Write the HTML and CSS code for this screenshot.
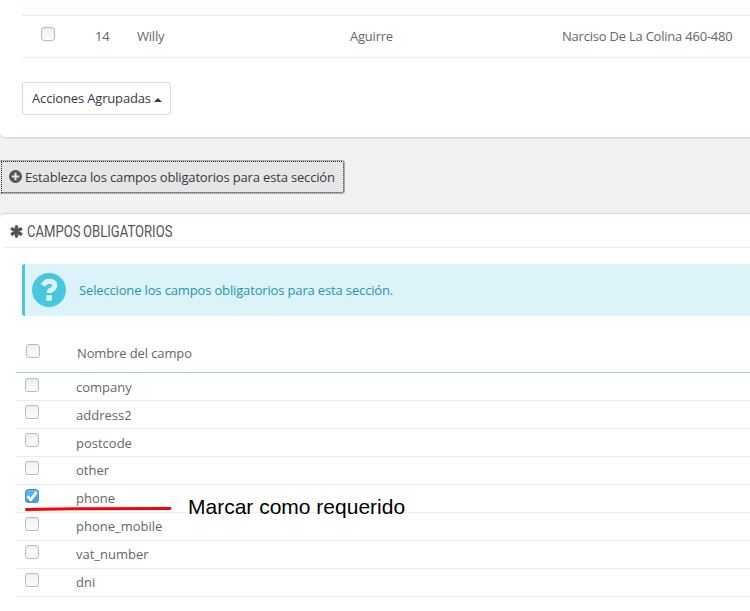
FILE: index.html
```html
<!DOCTYPE html>
<html lang="es">
<head>
<meta charset="utf-8">
<title>Campos obligatorios</title>
<link rel="stylesheet" href="styles.css">
</head>
<body>
<section class="panel customers">
  <div class="customer-prev"></div>
  <div class="customer-row">
    <span class="cell-check"><i class="check"></i></span>
    <span>14</span><span>Willy</span><span>Aguirre</span><span>Narciso De La Colina 460-480</span>
  </div>
  <button class="btn bulk" type="button"><span>Acciones Agrupadas</span><i class="caret"></i></button>
</section>

<button class="btn toggle" type="button">
  <svg class="plus" viewBox="0 0 13 13"><circle cx="6.5" cy="6.5" r="6.5" fill="#555"/><path d="M6.5 2.8v7.4M2.8 6.5h7.4" stroke="#e6e6e6" stroke-width="2"/></svg>
  <span>Establezca los campos obligatorios para esta sección</span>
</button>

<section class="panel fields">
  <h3 class="heading">
    <svg class="star" viewBox="0 0 13 13"><path d="M6.5 1.7v9.6M2.3 4.1l8.4 4.8M10.7 4.1L2.3 8.9" stroke="#555" stroke-width="3.4" stroke-linecap="round"/></svg>
    <span class="title">CAMPOS OBLIGATORIOS</span>
  </h3>
  <div class="alert">
    <svg class="help" viewBox="0 0 34 34"><circle cx="17" cy="17" r="17" fill="#4ac7e0"/><path d="M11 12.5Q13.2 8.2 17.2 8.2Q22.7 8.2 22.7 12.7Q22.7 15 19.6 16.8Q17.2 18 17.2 20" fill="none" stroke="#dcf4f9" stroke-width="5"/><path d="M14.3 22.2h5.5v5.6h-5.5z" fill="#dcf4f9"/></svg>
    <span>Seleccione los campos obligatorios para esta sección.</span>
  </div>
  <div class="table">
    <div class="thead"><i class="check"></i><span>Nombre del campo</span></div>
    <div class="row first"><i class="check"></i><span>company</span></div>
    <div class="row"><i class="check"></i><span>address2</span></div>
    <div class="row"><i class="check"></i><span>postcode</span></div>
    <div class="row raised"><i class="check"></i><span>other</span></div>
    <div class="row raised marked">
      <i class="check checked"><svg viewBox="0 0 14 14"><path d="M2.4 7.2l3.4 3.4L11.6 3.2" fill="none" stroke="#fff" stroke-width="2.7"/></svg></i><span>phone</span>
      <svg class="underline" viewBox="0 0 150 6"><path d="M2.5 3.6L50 2.8L146 2.500" fill="none" stroke="#f00" stroke-width="3" stroke-linecap="round"/></svg>
      <b class="note">Marcar como requerido</b>
    </div>
    <div class="row raised"><i class="check"></i><span>phone_mobile</span></div>
    <div class="row raised"><i class="check"></i><span>vat_number</span></div>
    <div class="row raised"><i class="check"></i><span>dni</span></div>
  </div>
</section>
</body>
</html>
```
FILE: styles.css
```css
* { box-sizing: border-box; }
body {
  margin: 0;
  height: 611px;
  overflow: hidden;
  background: #eff1f3;
  color: #666;
  font: 13px/18px "Open Sans", sans-serif;
}
svg { display: block; flex: none; }
.panel { background: #fff; width: 760px; }
.customers {
  height: 138px;
  padding-left: 22px;
  border-bottom: 1px solid #d3d8db;
  border-bottom-left-radius: 5px;
  box-shadow: 0 1px 1px #e6e9eb;
}
.customer-prev { height: 16px; background: #fcfdfe; border-bottom: 1px solid #eaedef; }
.customer-row {
  display: grid;
  grid-template-columns: 73px 42px 213px 212px 1fr;
  height: 42px;
  padding-top: 11px;
  border-bottom: 1px solid #eaedef;
  letter-spacing: -.22px;
}
.cell-check { padding-left: 19px; }
.check {
  display: block;
  flex: none;
  width: 14px;
  height: 14px;
  border: 1px solid #bbb;
  border-radius: 3px;
  background: linear-gradient(#eee, #fcfcfc);
}
.checked { border-color: #4c91bd; background: linear-gradient(#60bce9, #3f9fe0); }
.checked svg { width: 14px; height: 14px; margin: -1px; }
.btn {
  display: flex;
  align-items: center;
  font: inherit;
  letter-spacing: -.16px;
  white-space: nowrap;
  color: #363a41;
  border-radius: 3px;
}
.bulk {
  width: 149px;
  height: 33px;
  margin-top: 24px;
  padding: 0 0 1px 9px;
  background: #fff;
  border: 1px solid #d9dbde;
}
.caret {
  margin: 4px 0 0 3px;
  border: 4px solid transparent;
  border-top: 0;
  border-bottom-color: #363a41;
}
.toggle {
  width: 345px;
  height: 34px;
  margin: 22px 0 19px;
  padding: 0 0 0 9px;
  background: #e6e6e6;
  border: 1px solid #adadad;
  border-left: 0;
  border-radius: 0 3px 3px 0;
  outline: 1px dotted #222;
  outline-offset: -2px;
}
.plus { width: 13px; height: 13px; margin: -1px 3px 0 0; }
.fields {
  height: 410px;
  border-top: 1px solid #d3d8db;
  border-top-left-radius: 5px;
}
.heading {
  display: flex;
  align-items: center;
  height: 34px;
  margin: 0 0 0 4px;
  padding-left: 6px;
  border-bottom: 1px solid #eaedef;
}
.star { width: 13px; height: 13px; margin: 2px 4px 0 0; }
.title {
  margin-top: 1px;
  font: 400 17px/20px Roboto, sans-serif;
  word-spacing: -1px;
  color: #555;
  white-space: nowrap;
  transform: scaleX(.77);
  transform-origin: left;
}
.alert {
  display: flex;
  align-items: center;
  height: 52px;
  margin: 16px 0 0 22px;
  padding-left: 7px;
  border-left: 3px solid #4ac7e0;
  border-radius: 3px;
  background: #dcf4f9;
  color: #1e94ab;
  letter-spacing: -.15px;
}
.help { width: 34px; height: 34px; margin-right: 13px; }
.table { margin-left: 16px; }
.thead {
  display: flex;
  gap: 37px;
  height: 57px;
  padding: 28px 0 0 10px;
  border-bottom: 1px solid #a0d0eb;
  letter-spacing: -.12px;
}
.row {
  position: relative;
  display: flex;
  gap: 37px;
  height: 28px;
  padding: 4px 0 0 9px;
  border-bottom: 1px solid #eaedef;
}
.row span { margin-top: 1px; }
.first .check { margin-top: 1px; }
.raised span { margin-top: 0; }
.underline { position: absolute; left: 8px; top: 21px; width: 150px; height: 6px; z-index: 1; }
.note {
  position: absolute;
  left: 172px;
  top: 10px;
  z-index: 1;
  font: 400 21px/24px "Liberation Sans", sans-serif;
  color: #000;
  white-space: nowrap;
}
```
